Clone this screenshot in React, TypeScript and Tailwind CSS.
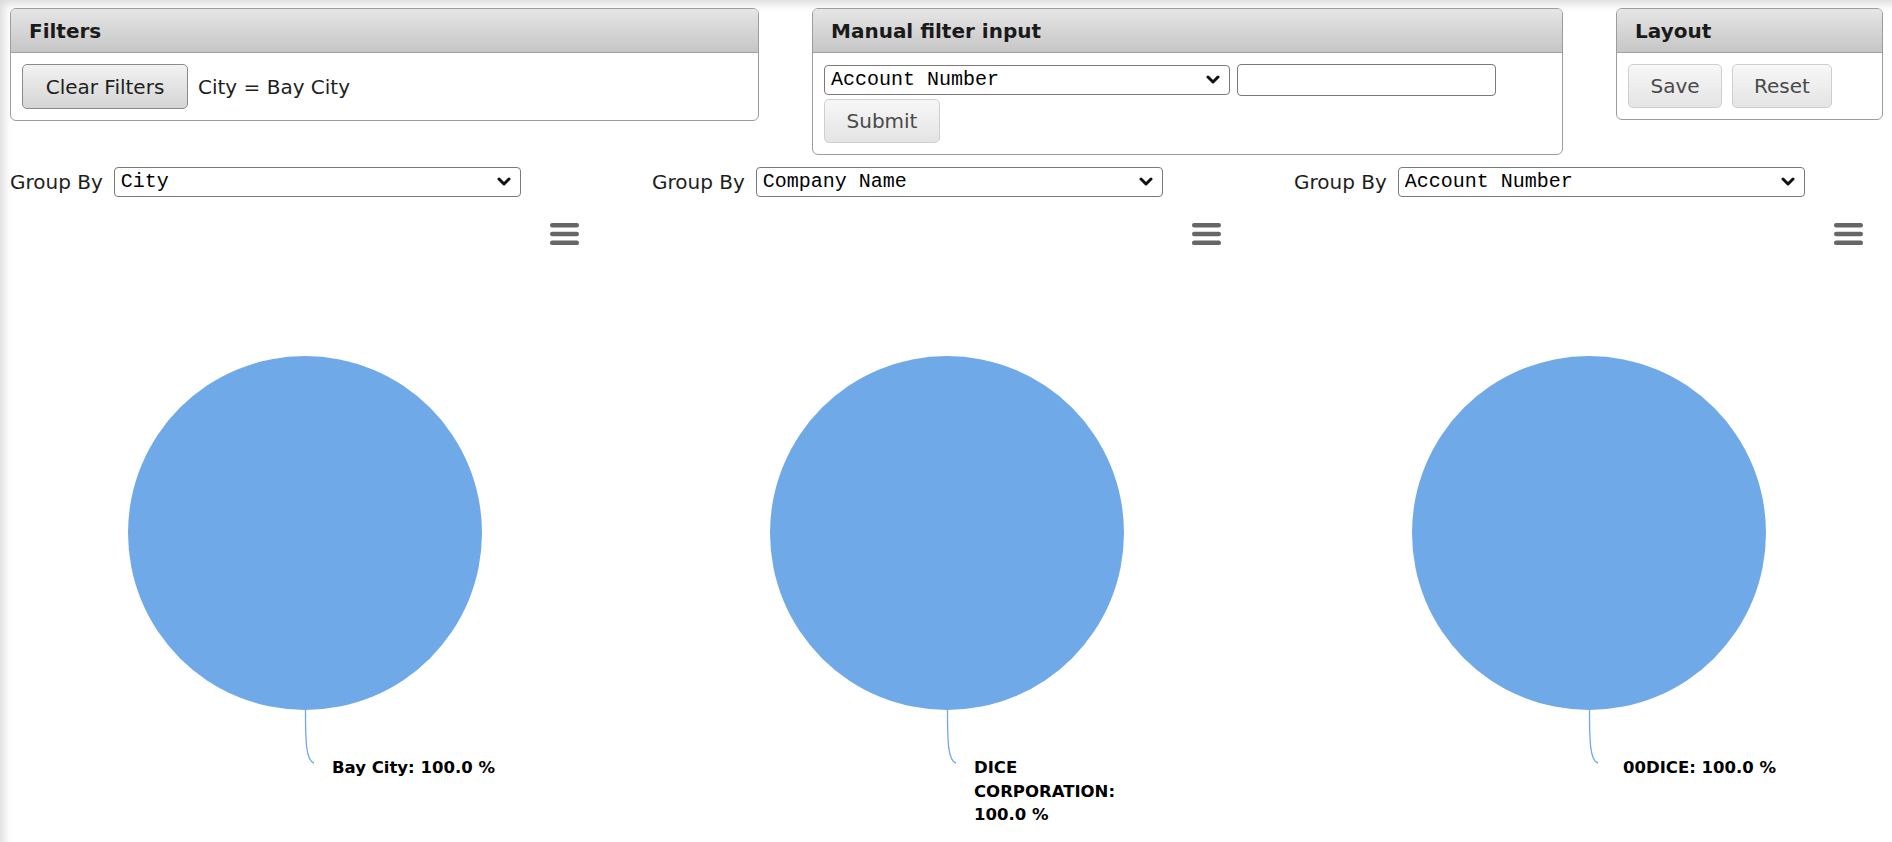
import { ReactNode } from "react";

const groupOptions = ["City", "Company Name", "Account Number", "State", "Zip Code"];

const charts = [
  { group: "City", label: ["Bay City: 100.0 %"], labelX: 322 },
  { group: "Company Name", label: ["DICE", "CORPORATION:", "100.0 %"], labelX: 322 },
  { group: "Account Number", label: ["00DICE: 100.0 %"], labelX: 329 },
];

function Chevron() {
  return (
    <svg
      className="pointer-events-none absolute right-[10px] top-1/2 -translate-y-1/2"
      width="14"
      height="10"
      viewBox="0 0 14 10"
    >
      <path
        d="M2 2 L7 7 L12 2"
        fill="none"
        stroke="#111"
        strokeWidth="3"
        strokeLinecap="round"
        strokeLinejoin="round"
      />
    </svg>
  );
}

function Select({ value, className }: { value: string; className: string }) {
  return (
    <div className={`relative ${className}`}>
      <select
        defaultValue={value}
        className="h-full w-full appearance-none rounded-[4px] border border-[#7a7a7a] bg-white pl-[6px] font-['Liberation_Mono',monospace] text-[20px] leading-none text-black outline-none"
      >
        {groupOptions.map((o) => (
          <option key={o}>{o}</option>
        ))}
      </select>
      <Chevron />
    </div>
  );
}

function Panel({ title, width, children }: { title: string; width: string; children: ReactNode }) {
  return (
    <div className={`${width} shrink-0 overflow-hidden rounded-[6px] border border-[#9c9c9c] bg-white`}>
      <div className="flex h-[44px] items-center border-b border-[#a3a3a3] bg-gradient-to-b from-[#e6e6e6] to-[#c6c6c6] pl-[18px] text-[20px] font-bold text-[#1a1a1a]">
        {title}
      </div>
      <div className="px-[11px] pb-[11px] pt-[11px]">{children}</div>
    </div>
  );
}

function LightButton({ children, width }: { children: ReactNode; width: string }) {
  return (
    <button className={`${width} h-[44px] rounded-[5px] border border-[#cfcfcf] bg-gradient-to-b from-[#f7f7f7] to-[#e4e4e4] text-[20px] text-[#4a4a4a]`}>
      {children}
    </button>
  );
}

function PieChart({ label, labelX }: { label: string[]; labelX: number }) {
  return (
    <svg width="600" height="646" viewBox="0 0 600 646" className="block">
      <rect x="540" y="26" width="29" height="4.5" rx="2.2" fill="#666" />
      <rect x="540" y="34.8" width="29" height="4.5" rx="2.2" fill="#666" />
      <rect x="540" y="43.6" width="29" height="4.5" rx="2.2" fill="#666" />
      <circle cx="295" cy="336" r="177" fill="#6fa9e8" />
      <path
        d="M295.5 513 C295.5 544 296 564 304 566"
        fill="none"
        stroke="#6fa9e8"
        strokeWidth="1.3"
      />
      <text
        x={labelX}
        y="576"
        fontFamily="'DejaVu Sans', Verdana, sans-serif"
        fontWeight="bold"
        fontSize="16.5"
        fill="#000"
      >
        {label.map((l, i) => (
          <tspan key={l} x={labelX} dy={i === 0 ? 0 : 23.5}>
            {l}
          </tspan>
        ))}
      </text>
    </svg>
  );
}

export default function App() {
  return (
    <div className="relative h-[842px] w-[1892px] overflow-hidden bg-white font-['DejaVu_Sans',Verdana,sans-serif] shadow-[inset_7px_7px_9px_-3px_rgba(0,0,0,0.14)]">
      <div className="flex items-start gap-[53px] pl-[10px] pt-[8px]">
        <Panel title="Filters" width="w-[749px]">
          <div className="flex items-center gap-[10px]">
            <button className="h-[45px] w-[166px] rounded-[5px] border border-[#8a8a8a] bg-gradient-to-b from-[#f2f2f2] to-[#d5d5d5] text-[20px] text-[#1e1e1e]">
              Clear Filters
            </button>
            <span className="text-[20px] text-[#1e1e1e]">City = Bay City</span>
          </div>
        </Panel>

        <Panel title="Manual filter input" width="w-[751px]">
          <div className="flex flex-col gap-[3px]">
            <div className="flex items-center gap-[7px]">
              <Select value="Account Number" className="h-[30px] w-[406px]" />
              <input
                type="text"
                className="h-[32px] w-[259px] rounded-[4px] border border-[#7a7a7a] bg-white outline-none"
              />
            </div>
            <LightButton width="w-[116px]">Submit</LightButton>
          </div>
        </Panel>

        <Panel title="Layout" width="w-[267px]">
          <div className="flex items-center gap-[10px]">
            <LightButton width="w-[94px]">Save</LightButton>
            <LightButton width="w-[100px]">Reset</LightButton>
          </div>
        </Panel>
      </div>

      <div className="flex pl-[10px] pt-[12px]">
        {charts.map((c) => (
          <div key={c.group} className="w-[642px] shrink-0">
            <div className="flex h-[30px] items-center gap-[11px]">
              <span className="text-[20px] text-[#1e1e1e]">Group By</span>
              <Select value={c.group} className="h-[30px] w-[407px]" />
            </div>
            <PieChart label={c.label} labelX={c.labelX} />
          </div>
        ))}
      </div>
    </div>
  );
}
